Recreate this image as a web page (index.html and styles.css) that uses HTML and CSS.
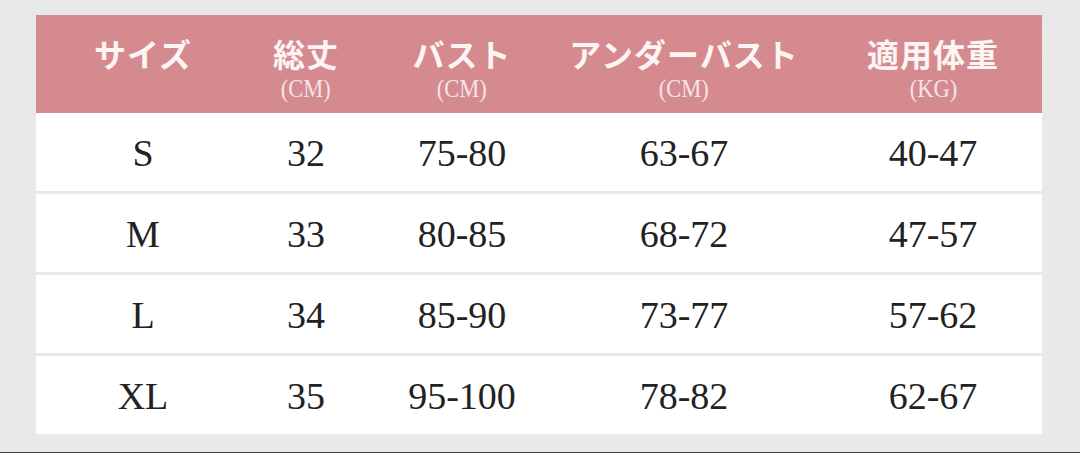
FILE: index.html
```html
<!DOCTYPE html>
<html lang="ja">
<head>
<meta charset="utf-8">
<title>サイズ表</title>
<link rel="stylesheet" href="styles.css">
</head>
<body>
<div class="page">
  <div class="table">
    <div class="row head">
      <div class="cell c1"><span class="jp">サイズ</span></div>
      <div class="cell c2"><span class="jp">総丈</span><span class="unit">(CM)</span></div>
      <div class="cell c3"><span class="jp">バスト</span><span class="unit">(CM)</span></div>
      <div class="cell c4"><span class="jp">アンダーバスト</span><span class="unit">(CM)</span></div>
      <div class="cell c5"><span class="jp">適用体重</span><span class="unit">(KG)</span></div>
    </div>
    <div class="row body">
      <div class="cell c1">S</div><div class="cell c2">32</div><div class="cell c3">75-80</div><div class="cell c4">63-67</div><div class="cell c5">40-47</div>
    </div>
    <div class="row body">
      <div class="cell c1">M</div><div class="cell c2">33</div><div class="cell c3">80-85</div><div class="cell c4">68-72</div><div class="cell c5">47-57</div>
    </div>
    <div class="row body">
      <div class="cell c1">L</div><div class="cell c2">34</div><div class="cell c3">85-90</div><div class="cell c4">73-77</div><div class="cell c5">57-62</div>
    </div>
    <div class="row body">
      <div class="cell c1">XL</div><div class="cell c2">35</div><div class="cell c3">95-100</div><div class="cell c4">78-82</div><div class="cell c5">62-67</div>
    </div>
  </div>
</div>
<div class="bottomline"></div>
</body>
</html>
```

FILE: styles.css
```css
html, body {
  margin: 0;
  padding: 0;
  background: #e9e9e9;
}
body {
  width: 1080px;
  height: 453px;
  overflow: hidden;
  position: relative;
  background: linear-gradient(#e7e8ea, #e9e9e9 60px);
}
.page {
  padding: 15px 0 0 36px;
}
.table {
  width: 1006px;
  display: flex;
  flex-direction: column;
  gap: 3px;
}
.row {
  display: grid;
  grid-template-columns: 214px 112px 200px 244px 236px;
}
.head {
  height: 98px;
  background: #d58a8f;
  margin-bottom: -3px;
}
.head .cell {
  display: flex;
  flex-direction: column;
  align-items: center;
  padding-top: 16px;
  box-sizing: border-box;
}
.jp {
  font-family: "Noto Sans CJK JP", sans-serif;
  font-weight: 700;
  font-size: 32px;
  line-height: 44px;
  color: #fdf4f4;
  letter-spacing: 1px;
}
.unit {
  font-family: "Liberation Serif", serif;
  font-size: 25px;
  line-height: 28px;
  color: #f7e4e5;
  transform: scaleX(0.9);
}
.body {
  height: 78px;
  background: #ffffff;
}
.body .cell {
  display: flex;
  align-items: center;
  justify-content: center;
  font-family: "Liberation Serif", serif;
  font-size: 38px;
  color: #222222;
  padding-top: 1px;
}
.c5 {
  padding-left: 18px;
}
.bottomline {
  position: absolute;
  left: 0;
  right: 0;
  bottom: 0;
  height: 1px;
  background: #3a3a3a;
}
```
